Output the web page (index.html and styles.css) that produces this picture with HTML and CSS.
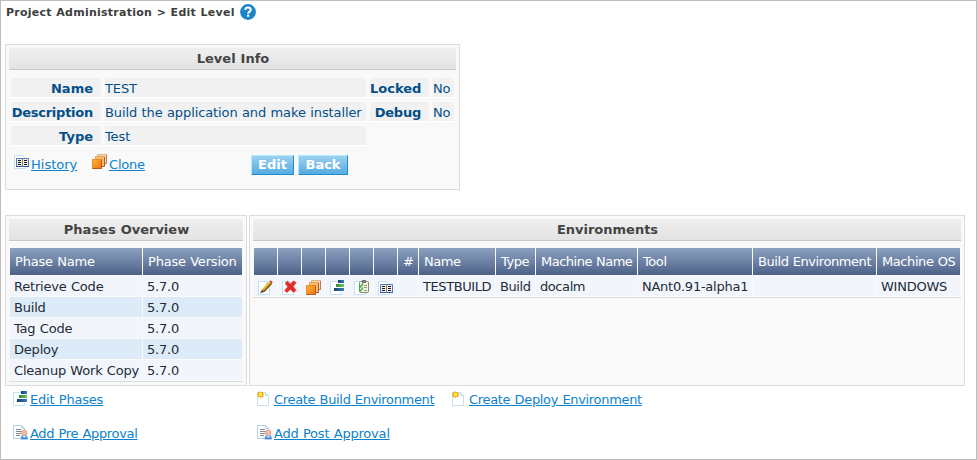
FILE: index.html
```html
<!DOCTYPE html>
<html lang="en">
<head>
<meta charset="utf-8">
<title>Edit Level</title>
<link rel="stylesheet" href="styles.css">
</head>
<body>
<svg class="defs" width="0" height="0">
  <defs>
    <linearGradient id="orange" x1="0" y1="0" x2="1" y2="1"><stop offset="0" stop-color="#ffb52e"/><stop offset="1" stop-color="#f0701a"/></linearGradient>
    <linearGradient id="blue" x1="0" y1="0" x2="1" y2="0"><stop offset="0" stop-color="#16406f"/><stop offset="1" stop-color="#3a7cc0"/></linearGradient>
    <linearGradient id="green" x1="0" y1="0" x2="1" y2="0"><stop offset="0" stop-color="#2e8a3c"/><stop offset="1" stop-color="#6cc85a"/></linearGradient>
    <symbol id="page" viewBox="0 0 16 16"><path d="M.5 1.500H8.500L11.500 4.500V14.500H.5Z" fill="#fff" stroke="#c3dff2"/><path d="M8.500 1.500V4.500H11.500" fill="#e4f1fa" stroke="#c3dff2"/></symbol>
    <symbol id="pencil" viewBox="0 0 16 16"><use href="#page"/><path d="M4 9.500 11 1.500 14 3.500 6.500 12Z" fill="#d99a1c"/><path d="M6 11.500 13.500 3.500" stroke="#7e5108" stroke-width="1.200"/><path d="M5 9.500 12 1.800" stroke="#f6cf55"/><path d="M11.500 1.500 12.500.3 14.700 2 13.700 3.700Z" fill="#c44a38"/><path d="M4 9.500 6.500 11.700 2 13.500Z" fill="#5a5142"/></symbol>
    <symbol id="delete" viewBox="0 0 16 16"><use href="#page"/><path d="M3 3.300 5.500 1 8.400 4 11.500.8 14.300 2.500 11.300 6.500 14.300 10.300 11.500 12.500 8.300 9.500 5 12.700 2.500 10.400 5.600 6.700Z" fill="#e32a2a" stroke="#f25a50" stroke-width=".6"/></symbol>
    <symbol id="clone" viewBox="0 0 16 16"><path d="M5.500.5H14.500V9.500H5.500Z" fill="#f9d9a8" stroke="#dfb38c"/><path d="M14.500 1V9.500H11" fill="none" stroke="#b97c60"/><path d="M3.500 2.500H12.500V12.500H3.500Z" fill="#f8bd69" stroke="#e3a05c"/><path d="M12.500 3V12.500H9" fill="none" stroke="#a85a35"/><path d="M.5 5.500H9.500V14.500H.5Z" fill="url(#orange)" stroke="#e88b28"/><path d="M9.500 5.500V14.500H.5" fill="none" stroke="#b25a20"/></symbol>
    <symbol id="phases" viewBox="0 0 16 16"><path d="M8 1.500H.5V14.500H11.500V12" fill="#fff" stroke="#c3dff2"/><path d="M8 0H14V3H8Z" fill="url(#blue)"/><path d="M6 4H14V7H6Z" fill="url(#green)"/><path d="M4 8H14V11H4Z" fill="url(#blue)"/></symbol>
    <symbol id="checklist" viewBox="0 0 16 16"><use href="#page"/><rect x="5.500" y="1.500" width="9" height="11" rx="1" fill="#f5f3df" stroke="#8c866f"/><path d="M8 0H12V3H8Z" fill="#777"/><path d="M5 5.500 6.500 7 9 3.500M5 9.500 6.500 11 9 7.500" fill="none" stroke="#35b743" stroke-width="1.400"/><path d="M10 5.500H13M10 7.500H13M10 10.500H13" stroke="#9b9a7d"/></symbol>
    <symbol id="book" viewBox="0 0 16 16"><path d="M.5 .5H8.500L11.500 3.500V13.500H.5Z" fill="#fff" stroke="#c3dff2"/><path d="M2.500 3.500H14.500V11.500H2.500Z" fill="#f3eee2" stroke="#5279c0"/><path d="M2 11.500H15" stroke="#2f55a5"/><path d="M8.500 3V12" stroke="#817d78"/><path d="M4 5.500H7M4 7.500H7M4 9.500H7M10 5.500H13M10 7.500H13M10 9.500H13" stroke="#161616"/></symbol>
    <symbol id="new" viewBox="0 0 16 16"><path d="M.5 1.500H8.500L11.500 4.500V14.500H.5Z" fill="#fff" stroke="#c3dff2"/><path d="M8.500 1.500V4.500H11.500" fill="#e4f1fa" stroke="#c3dff2"/><path d="M3.500 0 4.500 1.500 6.500.5 6 2.500 7.500 3.500 6 4.500 6.500 6.500 4.500 5.700 3.500 7.200 2.500 5.700.5 6.500 1.200 4.500-.5 3.500 1.200 2.500.5.5 2.500 1.500Z" fill="#ef9e16"/><circle cx="3.500" cy="3.500" r="1.900" fill="#ffee2b"/></symbol>
    <symbol id="approval" viewBox="0 0 16 16"><path d="M.5.500H8.500L11.500 3.500V13.500H.5Z" fill="#fff" stroke="#b7cde4"/><path d="M8.500.5V3.500H11.500" fill="none" stroke="#b7cde4"/><path d="M3 4.500H8M3 6.500H9M3 8.500H8M3 10.500H7" stroke="#82888f"/><path d="M7.700 14.500V12C7.700 9 14.700 9 14.700 12V14.500Z" fill="#6ba6e8"/><path d="M8 13.500H14.500" stroke="#3d7fd4"/><path d="M9.500 10.500H13L11.300 12.500Z" fill="#eef6ff"/><circle cx="11.200" cy="7.700" r="2.700" fill="#f4bda5" stroke="#d88d78" stroke-width=".7"/></symbol>
  </defs>
</svg>
<main class="page">
  <h1 class="crumb"><span class="crumb-text">Project Administration &gt; Edit Level</span>
    <svg class="help" viewBox="0 0 16 16"><circle cx="8" cy="8" r="7.900" fill="#1c84c8"/><path d="M5.300 6C5.300 2.700 10.800 2.800 10.800 5.800 10.800 7.700 8.100 7.600 8.100 9.700" fill="none" stroke="#fff" stroke-width="2"/><path d="M7 10.700H9.200V12.800H7Z" fill="#fff"/></svg>
  </h1>
  <section class="panel level">
    <h2 class="title"><span>Level Info</span></h2>
    <dl class="info">
      <dt>Name</dt><dd>TEST</dd><dt>Locked</dt><dd>No</dd>
      <dt class="tight">Description</dt><dd>Build the application and make installer</dd><dt class="tight">Debug</dt><dd>No</dd>
      <dt>Type</dt><dd>Test</dd>
    </dl>
    <div class="actions">
      <a class="link history" href="#"><svg><use href="#book"/></svg><span>History</span></a>
      <a class="link clone" href="#"><svg><use href="#clone"/></svg><span>Clone</span></a>
      <button class="btn edit">Edit</button><button class="btn back">Back</button>
    </div>
  </section>
  <div class="columns">
    <section class="panel">
      <h2 class="title"><span>Phases Overview</span></h2>
      <div class="table phases">
        <div class="row head"><span>Phase Name</span><span>Phase Version</span></div>
        <div class="row"><span>Retrieve Code</span><span>5.7.0</span></div>
        <div class="row alt"><span>Build</span><span>5.7.0</span></div>
        <div class="row"><span>Tag Code</span><span>5.7.0</span></div>
        <div class="row alt"><span>Deploy</span><span>5.7.0</span></div>
        <div class="row"><span>Cleanup Work Copy</span><span>5.7.0</span></div>
      </div>
    </section>
    <section class="panel">
      <h2 class="title"><span>Environments</span></h2>
      <div class="table envs">
        <div class="row head"><span></span><span></span><span></span><span></span><span></span><span></span><span>#</span><span>Name</span><span>Type</span><span class="wide">Machine Name</span><span>Tool</span><span>Build Environment</span><span>Machine OS</span></div>
        <div class="row"><span><svg><use href="#pencil"/></svg></span><span><svg><use href="#delete"/></svg></span><span><svg><use href="#clone"/></svg></span><span><svg><use href="#phases"/></svg></span><span><svg><use href="#checklist"/></svg></span><span class="low"><svg><use href="#book"/></svg></span><span></span><span>TESTBUILD</span><span>Build</span><span>docalm</span><span class="loose">NAnt0.91-alpha1</span><span></span><span class="loose">WINDOWS</span></div>
      </div>
    </section>
  </div>
  <nav class="links">
    <a class="link short" href="#"><svg><use href="#phases"/></svg><span>Edit Phases</span></a>
    <a class="link" href="#"><svg><use href="#new"/></svg><span>Create Build Environment</span></a>
    <a class="link" href="#"><svg><use href="#new"/></svg><span>Create Deploy Environment</span></a>
    <a class="link" href="#"><svg><use href="#approval"/></svg><span>Add Pre Approval</span></a>
    <a class="link short" href="#"><svg><use href="#approval"/></svg><span>Add Post Approval</span></a>
  </nav>
</main>
</body>
</html>
```
FILE: styles.css
```css
* { box-sizing: border-box; }
body { margin: 0; background: #fff; font: 13px/19px Verdana, "DejaVu Sans", sans-serif; color: #222b38; }
h1, h2, dl, dd { margin: 0; }
.defs { display: block; height: 0; }
.page { width: 977px; height: 460px; border: 1px solid #bdbdbd; padding: 0 4px; overflow: hidden; word-spacing: .44px; }
.crumb { display: flex; height: 43px; padding: 3px 1px; font-size: 11px; line-height: 17px; color: #3e3e3e; }
.crumb-text { width: 234px; white-space: nowrap; letter-spacing: .25px; }
.help { width: 16px; height: 16px; }
.panel { border: 1px solid #dcdcdc; background: #f9f9f9; padding: 3px; }
.title { height: 22px; border-bottom: 1px solid #c8c8c8; background: linear-gradient(#efefef, #e3e3e3); text-align: center; font-size: 13px; line-height: 21px; color: #444; padding-left: 1px; }
.level { width: 455px; height: 146px; }
.info { display: grid; grid-template-columns: 90px 261px 59px 21px; grid-auto-rows: 20px; gap: 4px; padding: 8px 2px 0; color: #034f88; }
.info dt, .info dd { background: #f1f1f1; border-bottom: 1px solid #fff; line-height: 21px; white-space: nowrap; }
.info dt { text-align: right; font-weight: bold; padding-right: 8px; }
.info dd { letter-spacing: -.11px; }
.info .tight { letter-spacing: -.25px; }
.actions { display: flex; height: 30px; padding: 9px 0 0 5px; }
.link { display: flex; color: #0d82cb; text-decoration: none; white-space: nowrap; letter-spacing: -.32px; }
.link svg { width: 16px; height: 16px; flex: none; }
.link span { margin-left: 1px; text-decoration: underline; text-underline-offset: 1px; }
.link.short { letter-spacing: -.2px; }
.history { width: 78px; letter-spacing: 0; }
.clone { width: 159px; letter-spacing: -.2px; }
.clone svg { margin-top: -1px; }
.btn { height: 20px; margin: 0 4px 0 0; padding: 0; border: 1px solid; border-color: #b5ebff #238bc9 #238bc9 #b5ebff; background: linear-gradient(#9cd1f0, #55abe0); color: #fff; font: bold 13px/18px Verdana, "DejaVu Sans", sans-serif; }
.edit { width: 43px; }
.back { width: 50px; }
.columns { display: grid; grid-template-columns: 242px 716px; gap: 2px; height: 171px; margin-top: 25px; }
.table { margin-top: 7px; border-bottom: 1px solid #dcdcdc; }
.row { display: grid; grid-template-rows: 20px; column-gap: 1px; height: 21px; padding: 0 1px; line-height: 22px; white-space: nowrap; }
.row span { background: #f2f6fc; padding-left: 4px; letter-spacing: -.2px; }
.row.alt span { background: #dcebf7; }
.row.head { grid-template-rows: 27px; height: 28px; line-height: 27px; color: #fff; }
.row.head span { padding-left: 5px; background: linear-gradient(#8da2c1, #4c6187); }
.phases .row { grid-template-columns: 132px 99px; }
.envs .row { grid-template-columns: repeat(6, 23px) 20px 76px 39px 101px 114px 123px 83px; }
.envs .row span { letter-spacing: -.42px; }
.envs .row .wide { letter-spacing: -.5px; }
.envs .row .loose { letter-spacing: -.25px; }
.envs svg { display: block; width: 16px; height: 16px; margin-top: 4px; }
.envs .low svg { margin-top: 5px; }
.links { display: grid; grid-template-columns: 244px 195px 250px; row-gap: 15px; padding: 4px 0 0 8px; }
.links .link { height: 19px; }
.links svg { margin-top: 1px; }
```
